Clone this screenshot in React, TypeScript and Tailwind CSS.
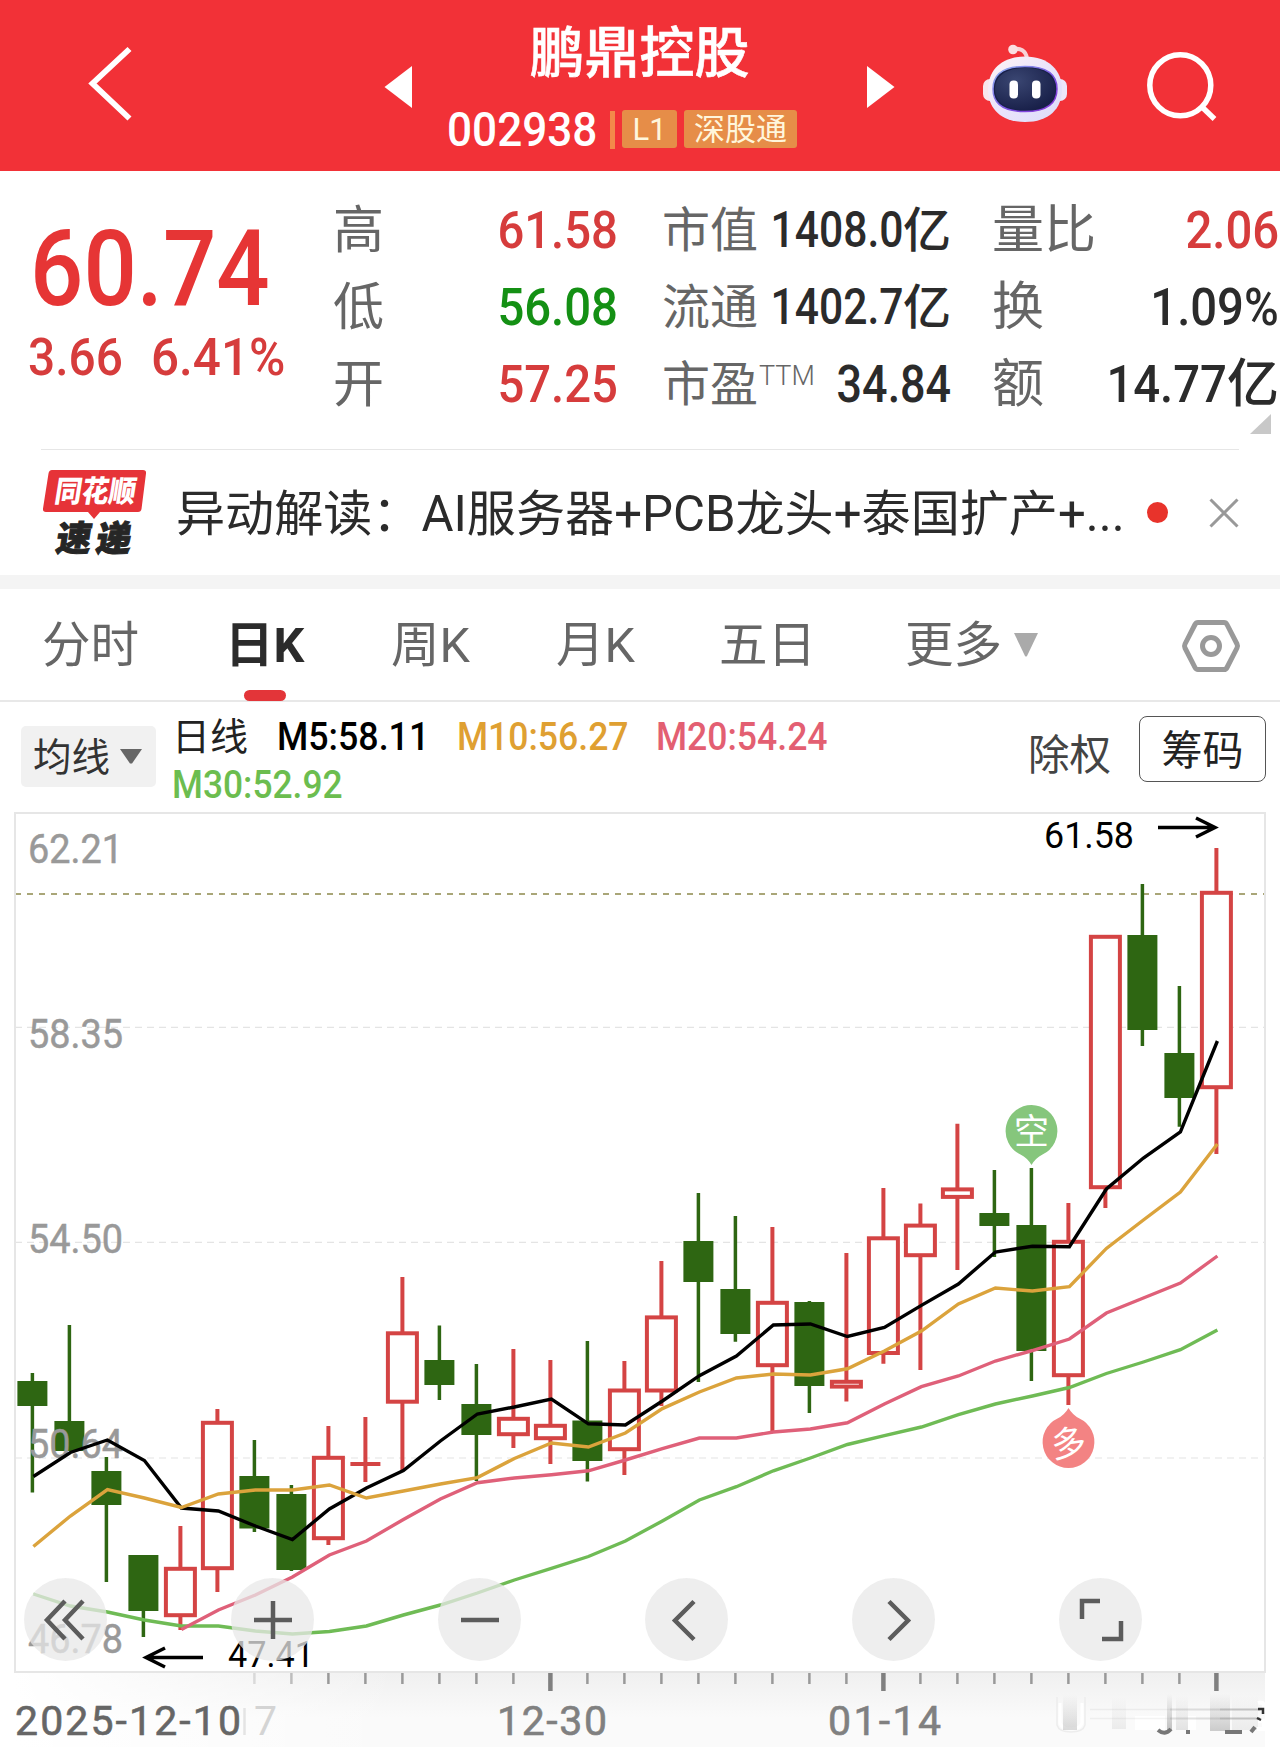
import type { ReactNode } from 'react';

import clsx from 'clsx';

type Candle = {
  up: boolean;
  high: number;
  top: number;
  bottom: number;
  low: number;
};

const FIRST_X = 32.4;

const STEP = 37;

const UP_COLOR = '#d44444';

const DOWN_COLOR = '#2e6612';

const xAt = (i: number) => FIRST_X + STEP * i;

const c = (kind: 'u' | 'd', high: number, top: number, bottom: number, low: number): Candle => ({ up: kind === 'u', high, top, bottom, low });

const candles: Candle[] = [
  c('d', 1373, 1381, 1406, 1492.5),
  c('d', 1325, 1421, 1451, 1451),
  c('d', 1457, 1471, 1505, 1582),
  c('d', 1555, 1555, 1611, 1637),
  c('u', 1526, 1567, 1617, 1630),
  c('u', 1409, 1421, 1570, 1592),
  c('d', 1440, 1476, 1528.5, 1532),
  c('d', 1485, 1494, 1570, 1571),
  c('u', 1426, 1456, 1540, 1545),
  c('u', 1417, 1464, 1464, 1482),
  c('u', 1277, 1331.5, 1403.5, 1471),
  c('d', 1325.4, 1360, 1385, 1400),
  c('d', 1364, 1404, 1435, 1481),
  c('u', 1349, 1417, 1436, 1448),
  c('u', 1360, 1424, 1440, 1464),
  c('d', 1341, 1420.5, 1461, 1481.6),
  c('u', 1361, 1388.7, 1451, 1475),
  c('u', 1261, 1315.6, 1392.3, 1406),
  c('d', 1193, 1241, 1282, 1382),
  c('d', 1216, 1289, 1334, 1341.7),
  c('u', 1227, 1301, 1367, 1431),
  c('d', 1301, 1302, 1386, 1413),
  c('u', 1253, 1380, 1388.4, 1401.6),
  c('u', 1188, 1236.5, 1354.8, 1363.7),
  c('u', 1203.4, 1223.8, 1257, 1370),
  c('u', 1123.8, 1187.6, 1198.7, 1270),
  c('d', 1170, 1213, 1226, 1257),
  c('d', 1168, 1225, 1351, 1381),
  c('u', 1203, 1240, 1377, 1405),
  c('u', 935, 935, 1189, 1208),
  c('d', 884, 935, 1030, 1046),
  c('d', 986, 1053, 1098, 1126.7),
  c('u', 848, 891, 1089, 1154),
];

const averages = [
  {
    color: '#6fbb55',
    from: 0,
    values: [1594, 1606, 1612, 1620, 1626, 1626, 1631, 1634, 1631.5, 1626, 1615, 1605, 1593, 1580, 1568.4, 1556.5, 1541, 1521, 1500, 1486.7, 1470.8, 1458, 1444.5, 1435.6, 1427, 1414.7, 1404, 1396, 1387.5, 1373.5, 1362, 1349.7, 1330],
  },
  {
    color: '#df6079',
    from: 4,
    values: [1629.5, 1610, 1595, 1577, 1555, 1541, 1519.5, 1499, 1482.7, 1478, 1474.8, 1470.8, 1460, 1448.7, 1438, 1438, 1432, 1429, 1422.8, 1404, 1386.7, 1376, 1361, 1350.5, 1339, 1313, 1298, 1283, 1256],
  },
  {
    color: '#000000',
    from: 0,
    values: [1476.5, 1452.5, 1440, 1460.5, 1508, 1511, 1526, 1539.5, 1509, 1488, 1470.5, 1441, 1414, 1407, 1399, 1423.8, 1425, 1401, 1375.7, 1356, 1325, 1324, 1336.5, 1327.5, 1305.4, 1284, 1252, 1246.3, 1246.7, 1189, 1158, 1132, 1041],
  },
  {
    color: '#dba33c',
    from: 0,
    values: [1546.5, 1516, 1489.5, 1498, 1507.5, 1494, 1490, 1490, 1485, 1498, 1491, 1484, 1477.6, 1458.5, 1443, 1447, 1433, 1408.6, 1392, 1378, 1374, 1375, 1368.8, 1351, 1331, 1304, 1288, 1291, 1286.7, 1248.4, 1220, 1192, 1144],
  },
];

const priceLabels = [
  { text: '62.21', y: 863 },
  { text: '58.35', y: 1048 },
  { text: '54.50', y: 1253 },
  { text: '50.64', y: 1457.5 },
  { text: '46.78', y: 1653 },
];

const tabs = [
  { label: '分时', className: 'ml-[42px] w-[96px]' },
  { label: '日K', className: 'ml-[87px] w-[77px] font-bold text-[#2b2b2b]' },
  { label: '周K', className: 'ml-[89px] w-[78px]' },
  { label: '月K', className: 'ml-[87px] w-[78px]' },
  { label: '五日', className: 'ml-[85px] w-[96px]' },
  { label: '更多', className: 'ml-[90px] w-[96px]' },
];

function Digits({ children, className }: { children: ReactNode; className?: string }) {
  return <span className={clsx('inline-block whitespace-pre font-medium', className)}>{children}</span>;
}

function Header() {
  return (
    <header className="flex h-[171px] items-start bg-[#f23137] text-white">
      <svg className="ml-[80px] mt-[40px] h-[88px] w-[60px]" viewBox="80 40 60 88" fill="none">
        <path d="M129.500 49 92.500 83.500 129.500 118.500" stroke="#fff" strokeWidth="5.800" />
      </svg>
      <svg className="ml-[240px] mt-[62px] h-[50px] w-[40px]" viewBox="380 62 40 50">
        <path d="M412 66v42L384.500 87z" fill="#fff" />
      </svg>

      <div className="ml-[19px] mt-[25px] flex w-[401px] flex-col items-center">
        <h1 className="text-[55px] font-medium leading-[56px] [-webkit-text-stroke:0.6px_white]">鹏鼎控股</h1>
        <div className="mt-[24px] flex h-[48px] w-full items-center">
          <Digits className="ml-[8px] w-[164px] origin-left scale-x-[0.9] text-[49px] leading-none">002938</Digits>
          <span className="ml-[-1px] mt-[1px] h-[38px] w-[5px] bg-[#f3894a]" />
          <span className="ml-[7px] flex h-[38px] w-[55px] items-center justify-center rounded-[3px] bg-[#e68d48] text-[31px] leading-none text-[#fff6dc]">L1</span>
          <span className="ml-[7px] flex h-[38px] w-[113px] items-center justify-center rounded-[3px] bg-[#e68d48] text-[31px] leading-none text-[#fff6dc]">深股通</span>
        </div>
      </div>

      <svg className="ml-[20px] mt-[62px] h-[50px] w-[40px]" viewBox="860 62 40 50">
        <path d="M867 66v42L894.500 87z" fill="#fff" />
      </svg>

      <svg className="ml-[70px] mt-[36px] h-[94px] w-[110px]" viewBox="970 36 110 94">
        <defs>
          <linearGradient id="shell" x1="0" y1="0" x2="1" y2="1">
            <stop offset="0" stopColor="#fff4f4" />
            <stop offset="0.5" stopColor="#eae4fb" />
            <stop offset="1" stopColor="#dcdcfa" />
          </linearGradient>
          <linearGradient id="rim" x1="0" y1="0" x2="1" y2="1">
            <stop offset="0" stopColor="#8fb4f0" />
            <stop offset="0.6" stopColor="#7a4fe0" />
            <stop offset="1" stopColor="#8a35d8" />
          </linearGradient>
          <radialGradient id="visor" cx="0.35" cy="0.3" r="0.8">
            <stop offset="0" stopColor="#3a4672" />
            <stop offset="1" stopColor="#161d46" />
          </radialGradient>
        </defs>
        <path d="M1013 49.500c7-2 13 1 14 9" fill="none" stroke="#f7d3d6" strokeWidth="4" />
        <circle cx="1013" cy="49.500" r="4.800" fill="#fbdfe1" />
        <rect x="983" y="79" width="18" height="22" rx="7" fill="#f8e6ec" />
        <rect x="1049" y="79" width="18" height="22" rx="7" fill="#ece6fa" />
        <path d="M1025 56.500c24 0 37 14 37 33s-13 32.500-37 32.500-37-13.500-37-32.500 13-33 37-33z" fill="url(#shell)" />
        <path d="M1025 66.500c20 0 32 7 32 22.500s-12 22.500-32 22.500-32-7-32-22.500 12-22.500 32-22.500z" fill="#18204a" stroke="url(#rim)" strokeWidth="1.500" />
        <path d="M1025 68c18 0 30 7 30 21s-12 21-30 21-30-7-30-21 12-21 30-21z" fill="url(#visor)" />
        <rect x="1009.500" y="80.500" width="8.500" height="18" rx="4" fill="#fff" />
        <rect x="1032" y="80.500" width="8.500" height="18" rx="4" fill="#fff" />
      </svg>

      <svg className="ml-[60px] mt-[46px] h-[80px] w-[80px]" viewBox="1140 46 80 80" fill="none" stroke="#fff" strokeWidth="5.500">
        <circle cx="1180.300" cy="85.300" r="30.500" />
        <path d="M1201.500 106.500l13 12.500" />
      </svg>
    </header>
  );
}

function QuoteRow({ label, children }: { label: ReactNode; children: ReactNode }) {
  return (
    <div className="flex h-[77px] items-center justify-between">
      <span className="flex items-center whitespace-nowrap text-[#666]">{label}</span>
      <span className="flex items-center whitespace-nowrap">{children}</span>
    </div>
  );
}

function Quote() {
  const small = 'ml-[-22px] origin-right scale-x-[0.86] text-[49.500px]';
  const large = 'origin-right scale-x-[0.9] text-[52.500px]';
  return (
    <section className="relative flex h-[278px] pt-[21px] leading-none">
      <div className="w-[333px] pl-[28px] text-[#e63535]">
        <div className="mt-[25px] h-[111px]">
          <Digits className="origin-left translate-x-[2px] scale-x-[0.895] text-[105px]">60.74</Digits>
        </div>
        <div className="flex h-[60px] items-center text-[#d63c3c]">
          <Digits className="w-[122px] origin-left scale-x-[0.92] text-[52px]">3.66</Digits>
          <Digits className="origin-left translate-x-[1px] scale-x-[0.95] text-[52px]">6.41%</Digits>
        </div>
      </div>

      <div className="w-[285px] text-[51px]">
        <QuoteRow label="高"><Digits className={clsx(large, 'text-[#d63c3c]')}>61.58</Digits></QuoteRow>
        <QuoteRow label="低"><Digits className={clsx(large, 'text-[#149014]')}>56.08</Digits></QuoteRow>
        <QuoteRow label="开"><Digits className={clsx(large, 'text-[#d63c3c]')}>57.25</Digits></QuoteRow>
      </div>

      <div className="ml-[44px] w-[289px] text-[48px] text-[#2b2b2b]">
        <QuoteRow label="市值"><Digits className={small}>1408.0</Digits><span className="font-medium">亿</span></QuoteRow>
        <QuoteRow label="流通"><Digits className={small}>1402.7</Digits><span className="font-medium">亿</span></QuoteRow>
        <QuoteRow label={<>市盈<span className="mb-[16px] ml-[1px] text-[27px] font-light">TTM</span></>}>
          <Digits className="ml-[-10px] origin-right scale-x-[0.88] text-[51px]">34.84</Digits>
        </QuoteRow>
      </div>

      <div className="ml-[41px] w-[287px] text-[52px] text-[#2b2b2b]">
        <QuoteRow label="量比"><Digits className={clsx(large, 'text-[#d63c3c]')}>2.06</Digits></QuoteRow>
        <QuoteRow label="换"><Digits className={large}>1.09%</Digits></QuoteRow>
        <QuoteRow label="额"><Digits className={large}>14.77</Digits><span className="font-medium">亿</span></QuoteRow>
      </div>

      <svg className="absolute right-[9px] top-[243px] h-[20px] w-[21px]" viewBox="0 0 21 20">
        <path d="M21 0v20H0z" fill="#c8c8c8" />
      </svg>
    </section>
  );
}

function News() {
  return (
    <section className="h-[126px]">
      <div className="mx-[41px] h-px bg-[#e6e6e6]" />
      <div className="flex h-[125px] items-center">
        <svg className="ml-[40px] h-[100px] w-[110px]" viewBox="40 463 110 100">
          <path d="M52 470h91q3.500 0 3 3.500l-4.500 35.500q-.5 3-3.500 3H100l-6 7-6-7H46q-3.500 0-3-3.500l5.500-35q.5-3.500 3.500-3.500z" fill="#e63338" />
          <g fontWeight="900" transform="skewX(-9)">
            <text x="133" y="502.500" textLength="81" lengthAdjust="spacingAndGlyphs" fontSize="30" fill="#fff">同花顺</text>
            <text x="142" y="551" textLength="35" lengthAdjust="spacingAndGlyphs" fontSize="35" fill="#262626" stroke="#262626">速</text>
            <text x="182" y="551" textLength="35" lengthAdjust="spacingAndGlyphs" fontSize="35" fill="#262626" stroke="#262626">递</text>
          </g>
        </svg>
        <p className="ml-[26px] w-[960px] whitespace-nowrap pt-[5px] text-[49.100px] leading-none text-[#2b2b2b]">异动解读：AI服务器+PCB龙头+泰国扩产+...</p>
        <span className="ml-[11px] h-[21px] w-[21px] rounded-full bg-[#e8332b]" />
        <svg className="ml-[40px] h-[32px] w-[32px]" viewBox="0 0 32 32" stroke="#999" strokeWidth="3">
          <path d="M2.500 2.500l27 27M29.500 2.500l-27 27" />
        </svg>
      </div>
    </section>
  );
}

function Tabs() {
  return (
    <nav className="relative flex h-[113px] items-center border-b-2 border-[#e8e8e8] text-[48.500px] leading-none text-[#666]">
      {tabs.map((t) => (
        <span key={t.label} className={clsx('whitespace-nowrap pt-[4px]', t.className)}>{t.label}</span>
      ))}
      <svg className="ml-[12px] h-[24px] w-[26px]" viewBox="0 0 26 22" preserveAspectRatio="none">
        <path d="M1 0h24L14 21q-1 1-2 0z" fill="#aaa" />
      </svg>
      <svg className="ml-[141px] mt-[2px] h-[60px] w-[62px]" viewBox="1179 615 62 60" fill="none" stroke="#999" strokeWidth="5">
        <path d="M1197 621.500h26q2 0 3 2l10 19.500q1 2 0 4l-10 19.500q-1 2-3 2h-26q-2 0-3-2l-10-19.500q-1-2 0-4l10-19.500q1-2 3-2z" />
        <circle cx="1210" cy="645" r="8.500" />
      </svg>
      <span className="absolute bottom-[-1px] left-[244px] h-[11px] w-[42px] rounded-full bg-[#e33539]" />
    </nav>
  );
}

function Legend() {
  return (
    <section className="flex h-[108px] leading-none">
      <div className="ml-[21px] mt-[24px] flex h-[61px] w-[135px] items-center rounded-[5px] bg-[#f1f1f1] pl-[12px] text-[38.500px] text-[#333]">
        <span className="pt-[4px]">均线</span>
        <svg className="ml-[10px] h-[15px] w-[22px]" viewBox="0 0 22 15"><path d="M0 0h22L12 14.500h-2z" fill="#666" /></svg>
      </div>
      <div className="ml-[16px] mt-[10px] w-[781px] text-[38px]">
        <div className="flex h-[49px] items-center">
          <span className="w-[105px] text-[#222]">日线</span>
          <Digits className="w-[180px] origin-left scale-x-[0.905] text-[39.500px] text-black">M5:58.11</Digits>
          <Digits className="w-[199px] origin-left scale-x-[0.9] text-[39.500px] text-[#dfa032]">M10:56.27</Digits>
          <Digits className="origin-left scale-x-[0.9] text-[39.500px] text-[#e35f72]">M20:54.24</Digits>
        </div>
        <div className="flex h-[47px] items-center">
          <Digits className="origin-left scale-x-[0.895] text-[39.500px] text-[#6cbd4f]">M30:52.92</Digits>
        </div>
      </div>
      <span className="ml-[75px] mt-[33px] whitespace-nowrap text-[41.500px] text-[#444]">除权</span>
      <button className="ml-[28px] mt-[14px] h-[66px] w-[127px] rounded-[8px] border-[1.500px] border-[#555] pt-[5px] text-[41px] leading-none text-[#222]">筹码</button>
    </section>
  );
}

function CandleShape({ candle, x }: { candle: Candle; x: number }) {
  const { up, high, top, bottom, low } = candle;
  const color = up ? UP_COLOR : DOWN_COLOR;

  if (top === bottom) {
    return <path d={`M${x} ${high}V${low}M${x - 15} ${top}h30`} stroke={color} strokeWidth="4" />;
  }

  return (
    <g stroke={color} strokeWidth={up ? 4 : 3.5}>
      <path d={`M${x} ${high}V${top + 1}M${x} ${bottom - 1}V${low}`} />
      {up ? (
        <rect x={x - 14.5} y={top + 1.8} width="29" height={bottom - top - 3.6} fill="#fff" strokeWidth="4" />
      ) : (
        <rect x={x - 15} y={top} width="30" height={bottom - top} fill={color} stroke="none" />
      )}
    </g>
  );
}

function Chart() {
  return (
    <svg className="block h-[937px] w-full" viewBox="0 810 1280 937" fontWeight="400">
      <defs>
        <linearGradient id="axis" x1="0" y1="0" x2="0" y2="1">
          <stop offset="0" stopColor="#f0f0f0" />
          <stop offset="0.6" stopColor="#fafafa" />
        </linearGradient>
        <linearGradient id="axisFade" x1="0" y1="0" x2="1" y2="0">
          <stop offset="0" stopColor="#fff" />
          <stop offset="1" stopColor="#fff" stopOpacity="0" />
        </linearGradient>
        <linearGradient id="smudge" x1="0" y1="0" x2="0" y2="1">
          <stop offset="0" stopColor="#999" stopOpacity="0" />
          <stop offset="1" stopColor="#999" stopOpacity="0.600" />
        </linearGradient>
      </defs>

      <rect x="15" y="1673" width="1250" height="74" fill="url(#axis)" />
      <rect x="15" y="1673" width="385" height="74" fill="url(#axisFade)" />

      <g stroke="#e4e4e4" strokeWidth="1.200" strokeDasharray="7 5">
        <path d="M15 1027.300H1265M15 1242.300H1265M15 1458H1265" />
      </g>
      <path d="M15 894H1265" stroke="#a9a678" strokeWidth="2" strokeDasharray="6 6" />
      <rect x="15" y="813" width="1250" height="859" fill="none" stroke="#e6e6e6" strokeWidth="2" />

      {candles.map((candle, i) => (
        <CandleShape key={i} candle={candle} x={xAt(i)} />
      ))}

      <g fill="#999" stroke="#999" strokeWidth="0.500" fontSize="41">
        {priceLabels.map((l) => (
          <text key={l.text} x="28" y={l.y} textLength="95" lengthAdjust="spacingAndGlyphs">{l.text}</text>
        ))}
      </g>

      {averages.map((ma) => (
        <polyline key={ma.color} points={ma.values.map((v, i) => `${xAt(i + ma.from) + 1},${v}`).join(' ')} fill="none" stroke={ma.color} strokeWidth="3.400" />
      ))}

      {/* highest and lowest price markers */}
      <g fill="none" stroke="#000" strokeWidth="3.500">
        <path d="M1158 827.500H1214M1196 818l19 9.500-19 9.500" />
        <path d="M203 1657.500H147M165 1648l-19 9.500 19 9.500" />
      </g>
      <g fontSize="36">
        <text x="1044" y="848" textLength="90" lengthAdjust="spacingAndGlyphs">61.58</text>
        <text x="228" y="1667" textLength="86" lengthAdjust="spacingAndGlyphs">47.41</text>
      </g>

      {/* short / long signals */}
      <g fontSize="35" fill="#fff" textAnchor="middle">
        <path d="M1031.500 1105a26 26 0 0 1 11 49.500q-7 3.500-11 10.500-4-7-11-10.500a26 26 0 0 1 11-49.500z" fill="#86c67c" />
        <text x="1031.500" y="1144">空</text>
        <path d="M1068.500 1468a26 26 0 0 0 11-49.500q-7-3.500-11-10.500-4 7-11 10.500a26 26 0 0 0 11 49.500z" fill="#f38383" />
        <text x="1068.500" y="1456" transform="rotate(-8 1068.500 1443)">多</text>
      </g>

      {candles.map((_, i) => {
        if (i < 6) return null;
        const major = i === 14 || i === 23 || i === 32;
        return <path key={i} d={`M${xAt(i)} 1673v${major ? 18 : 11}`} stroke={major ? '#808080' : '#999'} strokeWidth={major ? 4.5 : 2.5} opacity={i === 6 ? 0.3 : i === 7 ? 0.6 : 1} />;
      })}

      <g fontSize="41" fill="#808080" stroke="#808080" strokeWidth="0.600">
        <text x="254" y="1735" fill="#d4d4d4" stroke="none">7</text>
        <text x="15" y="1735" textLength="226" lengthAdjust="spacing" fill="#666" stroke="#666">2025-12-10</text>
        <text x="497" y="1735" textLength="110" lengthAdjust="spacing">12-30</text>
        <text x="828" y="1735" textLength="113" lengthAdjust="spacing">01-14</text>
      </g>
      <path d="M244.500 1708v27" stroke="#e4e4e4" strokeWidth="2.500" />

      {/* last date, mostly faded out */}
      <g>
        <path d="M1057 1697v28q2 7 14 7t14-7v-28" fill="none" stroke="#ededed" strokeWidth="1.500" />
        <path d="M1060 1703v20q2 6 11 6t11-6v-20" fill="none" stroke="#fff" strokeWidth="3" />
        <rect x="1063" y="1695" width="14" height="35" fill="url(#smudge)" opacity="0.600" />
        <rect x="1112" y="1697" width="14" height="32" fill="url(#smudge)" opacity="0.250" />
        <rect x="1135" y="1716" width="30" height="14" fill="#fff" />
        <rect x="1167" y="1694" width="5" height="36" fill="url(#smudge)" />
        <rect x="1176" y="1696" width="12" height="34" fill="url(#smudge)" opacity="0.400" />
        <rect x="1188" y="1716" width="8" height="14" fill="#fff" />
        <rect x="1210" y="1694" width="20" height="37" fill="url(#smudge)" opacity="0.800" />
        <rect x="1232" y="1696" width="26" height="34" fill="url(#smudge)" opacity="0.250" />
        <path d="M1090 1709.500h80M1090 1718.500h80" stroke="#999" strokeOpacity="0.120" strokeWidth="1.500" />
        <path d="M1170 1709.500h50M1170 1718.500h50" stroke="#888" strokeOpacity="0.250" strokeWidth="2" />
        <path d="M1220 1709.500h40M1220 1718.500h40" stroke="#888" strokeOpacity="0.450" strokeWidth="2" />
        <path d="M1158 1730q7 6 13-1M1186 1732h4M1225 1732h17M1251 1732l4-5" fill="none" stroke="#777" strokeWidth="4" />
        <path d="M1258 1703q6-2 6 4v5M1258 1721h6v8h-7" fill="none" stroke="#fff" strokeWidth="4" />
        <path d="M1258 1709h5v5M1257 1718l4 2" fill="none" stroke="#333" strokeWidth="2.500" />
      </g>
    </svg>
  );
}

function Controls() {
  const icons = [
    <path key="first" d="M65 1601 47 1620l18 19M83 1601l-18 19 18 19" />,
    <path key="in" d="M254 1620h38M273 1601v38" />,
    <path key="out" d="M461 1620h38" />,
    <path key="prev" d="M694 1601.500l-19 19 19 19" />,
    <path key="next" d="M889 1601.500l19 19-19 19" />,
    <path key="full" d="M1082 1619v-18h18M1102 1639h19v-18" />,
  ];
  return (
    <div className="absolute left-[24px] top-[768px] flex gap-[124px]">
      {icons.map((icon, i) => (
        <button key={i} className="h-[83px] w-[83px] rounded-full bg-[#e8e8e8]/75">
          <svg className="h-full w-full" viewBox={`${24 + i * 207} 1578 83 83`} fill="none" stroke="#5c5c5c" strokeWidth="4.500">{icon}</svg>
        </button>
      ))}
    </div>
  );
}

export default function App() {
  return (
    <main className="h-[1747px] w-[1280px] overflow-hidden bg-white font-[Roboto,'Noto_Sans_CJK_SC',sans-serif]">
      <Header />
      <Quote />
      <News />
      <div className="h-[14px] bg-[#f4f4f4]" />
      <Tabs />
      <Legend />
      <div className="relative">
        <Chart />
        <Controls />
      </div>
    </main>
  );
}
